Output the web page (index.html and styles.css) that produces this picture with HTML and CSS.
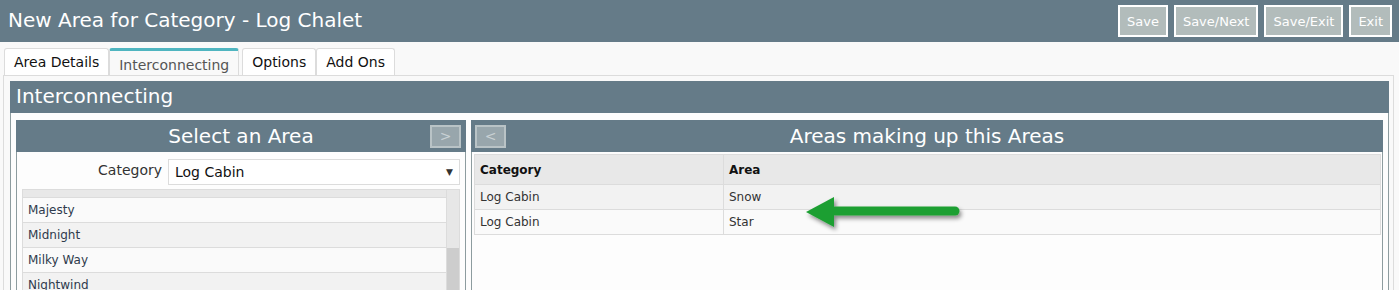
FILE: index.html
```html
<!DOCTYPE html>
<html>
<head>
  <title>New Area for Category - Log Chalet</title>
  <link rel="stylesheet" href="styles.css">
</head>
<body>

<div class="topbar">
  <div class="page-title">New Area for Category - Log Chalet</div>
  <div class="actions">
    <button class="act-btn">Save</button>
    <button class="act-btn">Save/Next</button>
    <button class="act-btn">Save/Exit</button>
    <button class="act-btn">Exit</button>
  </div>
</div>

<div class="tabs">
  <div class="tab">Area Details</div>
  <div class="tab active">Interconnecting</div>
  <div class="tab">Options</div>
  <div class="tab">Add Ons</div>
</div>

<div class="tab-body">
  <div class="section-head">Interconnecting</div>

  <div class="section-box">
    <!-- left: pick an area -->
    <div class="panel panel-left">
      <div class="panel-head">
        <span></span>
        <span class="panel-title">Select an Area</span>
        <button class="move-btn right">&gt;</button>
      </div>
      <div class="panel-body">
        <div class="field-row">
          <label class="field-label">Category</label>
          <div class="select-box">
            <span>Log Cabin</span>
            <span class="caret">&#9660;</span>
          </div>
        </div>

        <div class="list-wrap">
          <div class="list">
            <div class="list-head"></div>
            <div class="list-row">Majesty</div>
            <div class="list-row alt">Midnight</div>
            <div class="list-row">Milky Way</div>
            <div class="list-row alt">Nightwind</div>
            <div class="list-row">Ocean</div>
          </div>
          <div class="scrollbar"><div class="thumb"></div></div>
        </div>
      </div>
    </div>

    <!-- right: selected areas -->
    <div class="panel panel-right">
      <div class="panel-head">
        <button class="move-btn left">&lt;</button>
        <span class="panel-title">Areas making up this Areas</span>
        <span></span>
      </div>
      <div class="panel-body table-body">
        <table class="grid">
          <thead>
            <tr><th class="col-cat">Category</th><th>Area</th></tr>
          </thead>
          <tbody>
            <tr class="alt"><td>Log Cabin</td><td>Snow</td></tr>
            <tr><td>Log Cabin</td><td>Star</td></tr>
          </tbody>
        </table>

        <svg class="pointer" width="170" height="44" viewBox="0 0 170 44">
          <defs>
            <filter id="shade" x="-20%" y="-50%" width="140%" height="200%">
              <feDropShadow dx="2" dy="3" stdDeviation="2" flood-color="#000" flood-opacity="0.45"/>
            </filter>
          </defs>
          <g filter="url(#shade)">
            <line x1="34" y1="20" x2="154" y2="20" stroke="#1e9f33" stroke-width="9" stroke-linecap="round"/>
            <polygon points="5,21 33,6 33,36" fill="#1e9f33"/>
          </g>
        </svg>
      </div>
    </div>
  </div>
</div>

</body>
</html>
```

FILE: styles.css
```css
body {
  margin: 0;
  font-family: "DejaVu Sans", Verdana, sans-serif;
  background-color: #f9f9f9;
  color: #333;
  overflow: hidden;
}

.topbar {
  height: 42px;
  background-color: #657b88;
  display: flex;
  justify-content: space-between;
  align-items: center;
  padding: 0 7px 0 8px;
}

.page-title {
  color: white;
  font-size: 20px;
  margin-top: -2px;
}

.actions {
  display: flex;
  gap: 6px;
}

.act-btn {
  height: 32px;
  border: 2px solid white;
  background-color: #b2bcbb;
  color: white;
  font-family: inherit;
  font-size: 13px;
  padding: 0 7px;
  cursor: pointer;
}

.tabs {
  display: flex;
  padding: 6px 0 0 4px;
}

.tab {
  height: 26px;
  line-height: 26px;
  padding: 0 9px;
  font-size: 14px;
  color: #111;
  background-color: white;
  border: 1px solid #dcdcdc;
  border-bottom: none;
  border-radius: 3px 3px 0 0;
}

.tab.active {
  background-color: #f9f9f9;
  color: #555;
  border-top: 3px solid #4fb5c0;
  height: 24px;
  line-height: 28px;
  margin-right: 3px;
}

.tab-body {
  margin: 0 5px 0 3px;
  border: 1px solid #dcdcdc;
  border-bottom: none;
  padding: 5px 4px 0 6px;
  height: 300px;
}

.section-head {
  background-color: #657b88;
  color: white;
  font-size: 20px;
  height: 32px;
  line-height: 31px;
  padding-left: 6px;
}

.section-box {
  background-color: #fdfdfd;
  border: 1px solid #8d9c9f;
  border-top: none;
  display: flex;
  gap: 5px;
  padding: 7px 5px 0 5px;
  height: 260px;
}

.panel {
  display: flex;
  flex-direction: column;
}

.panel-left {
  width: 450px;
}

.panel-right {
  flex: 1;
}

.panel-head {
  background-color: #657b88;
  height: 32px;
  display: grid;
  grid-template-columns: 1fr auto 1fr;
  align-items: center;
}

.panel-title {
  color: white;
  font-size: 20px;
  margin-top: -1px;
}

.move-btn {
  width: 31px;
  height: 23px;
  background-color: #98a6ac;
  border: 2px solid #b9c3c6;
  color: #c9d1d4;
  font-family: inherit;
  font-size: 14px;
  padding: 0;
  cursor: pointer;
}

.move-btn.right {
  justify-self: end;
  margin-right: 5px;
}

.move-btn.left {
  justify-self: start;
  margin-left: 4px;
}

.panel-body {
  flex: 1;
  border: 1px solid #8d9c9f;
  border-top: none;
  background-color: #fdfdfd;
}

.field-row {
  display: flex;
  align-items: center;
  padding: 7px 5px 0 0;
}

.field-label {
  width: 145px;
  text-align: right;
  padding-right: 6px;
  font-size: 14px;
  color: #333;
  margin-top: -4px;
}

.select-box {
  flex: 1;
  height: 24px;
  border: 1px solid #dcdcdc;
  background-color: white;
  display: flex;
  justify-content: space-between;
  align-items: center;
  padding: 0 6px;
  font-size: 14px;
  color: #111;
}

.caret {
  font-size: 9px;
  color: #333;
}

.list-wrap {
  margin: 4px 5px 0 5px;
  border: 1px solid #dcdcdc;
  display: flex;
  height: 110px;
  overflow: hidden;
}

.list {
  flex: 1;
}

.list-head {
  height: 7px;
  background-color: #e8e8e8;
  border-bottom: 1px solid #dcdcdc;
}

.list-row {
  height: 24px;
  line-height: 25px;
  padding-left: 5px;
  font-size: 12px;
  color: #2f3a4c;
  background-color: #fafafa;
  border-bottom: 1px solid #dcdcdc;
}

.list-row.alt {
  background-color: #f2f2f2;
}

.scrollbar {
  width: 12px;
  background-color: #e7e7e7;
  border-left: 1px solid #dcdcdc;
  padding-top: 58px;
}

.thumb {
  height: 80px;
  background-color: #cdcdcd;
}

.table-body {
  position: relative;
  padding: 2px 1px 0 2px;
}

.grid {
  width: 100%;
  border-collapse: collapse;
  font-size: 12px;
  border: 1px solid #dcdcdc;
}

.grid th {
  height: 29px;
  text-align: left;
  background-color: #e8e8e8;
  color: #111;
  padding: 0 5px;
  border: 1px solid #dcdcdc;
}

.grid th.col-cat {
  width: 238px;
}

.grid td {
  height: 24px;
  padding: 0 5px;
  color: #333;
  background-color: #fafafa;
  border: 1px solid #dcdcdc;
  border-top: none;
}

.grid tr.alt td {
  background-color: #f2f2f2;
}

.pointer {
  position: absolute;
  left: 329px;
  top: 39px;
}
```
